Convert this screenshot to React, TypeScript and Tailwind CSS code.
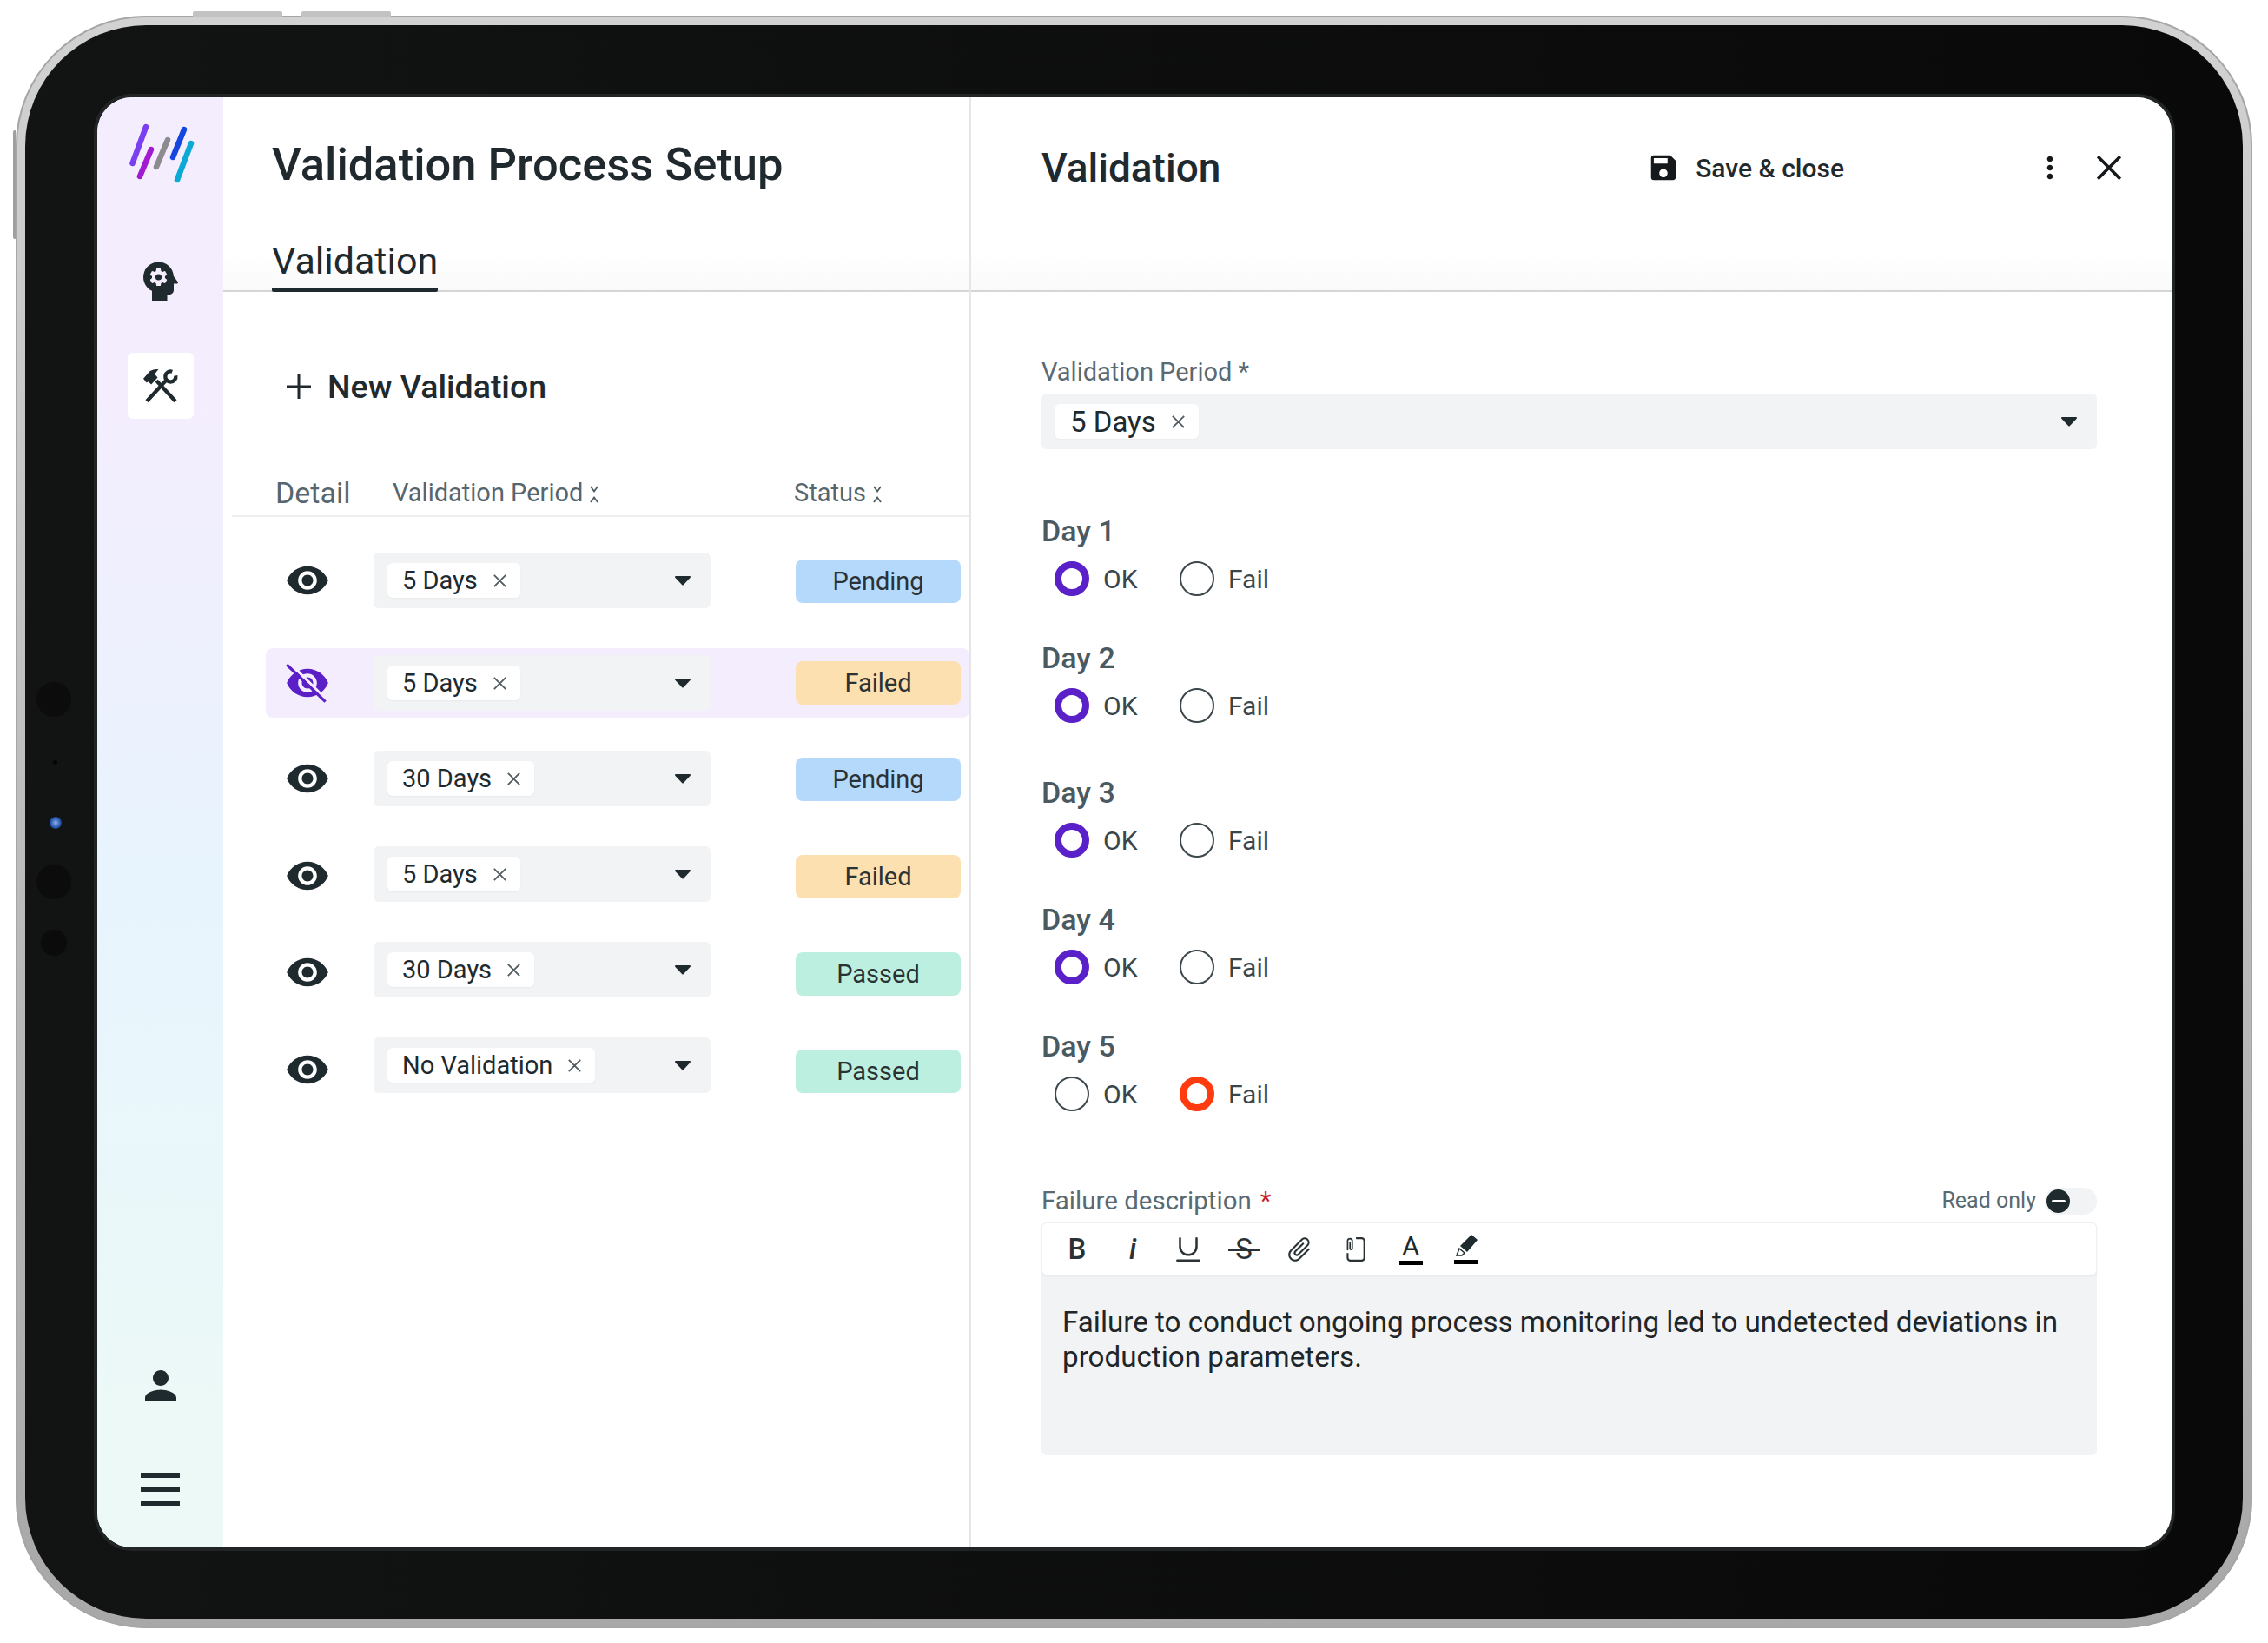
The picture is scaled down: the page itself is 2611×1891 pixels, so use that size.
import React from "react";
import { MdPsychology, MdPerson, MdSave, MdMoreVert, MdAttachFile } from "react-icons/md";
import { Underline } from "lucide-react";

const FONT = "font-['Roboto','Noto_Sans',sans-serif]";
const EYE =
  "M12 4.5C7 4.5 2.73 7.61 1 12c1.73 4.39 6 7.5 11 7.5s9.27-3.11 11-7.5c-1.73-4.39-6-7.5-11-7.5zM12 17c-2.76 0-5-2.24-5-5s2.24-5 5-5 5 2.24 5 5-2.24 5-5 5zm0-8c-1.66 0-3 1.34-3 3s1.34 3 3 3 3-1.34 3-3-1.34-3-3-3z";

function Logo() {
  return (
    <svg viewBox="140 136 85 78" className="w-[85px] h-[78px]" fill="none" strokeWidth="6.5" strokeLinecap="round">
      <path d="M166 146L150.500 188" stroke="#7a3ff0" />
      <path d="M172 172L159 203" stroke="#a11bd1" />
      <path d="M191 161L178 192" stroke="#8b8b90" />
      <path d="M210 149L197 181" stroke="#1546e0" />
      <path d="M218 165L202 207" stroke="#0aa9d6" />
    </svg>
  );
}

function ToolsIcon() {
  return (
    <svg viewBox="70 400 125 125" className="w-[42px] h-[42px]" fill="none" stroke="#1f2a2e" strokeWidth="13">
      <path d="M85 515L150 445" />
      <path d="M183 515L118 445" />
      <path d="M73 438L96 412Q110 404 125 406L112 422L122 434L100 458L90 448L84 452Z" fill="#1f2a2e" stroke="none" />
      <path d="M172 414A18 18 0 1 0 184 428" />
    </svg>
  );
}

function Caret() {
  return (
    <svg viewBox="0 0 20 12" className="w-[20px] h-[12px]">
      <path d="M2 2h16l-8 8.500z" fill="#1f2a2e" stroke="#1f2a2e" strokeWidth="2" strokeLinejoin="round" />
    </svg>
  );
}

function CloseMark({ className }: { className: string }) {
  return (
    <svg viewBox="0 0 14 14" className={className} fill="none" stroke="#4f5b60" strokeWidth="1.500">
      <path d="M1.500 1.500l11 11M12.500 1.500l-11 11" />
    </svg>
  );
}

function SortMark() {
  return (
    <svg viewBox="0 0 14 24" className="w-[14px] h-[24px] ml-[6px] mt-[3px]" fill="none" stroke="#4f5b60" strokeWidth="1.800">
      <path d="M3 3l4 5.500 4-5.500M3 21l4-5.500 4 5.500" />
    </svg>
  );
}

function Chip({ label, wide }: { label: string; wide?: boolean }) {
  return (
    <div
      className={
        wide
          ? "flex items-center h-[40px] bg-white rounded-[6px] pl-[18px] pr-[15px] text-[33px] text-[#20292d] shadow-[0_1px_2px_rgba(0,0,0,0.04)]"
          : "flex items-center h-[40px] bg-white rounded-[6px] pl-[17px] pr-[15px] text-[29px] text-[#20292d] shadow-[0_1px_2px_rgba(0,0,0,0.04)]"
      }
    >
      <span className="pt-[2px]">{label}</span>
      <CloseMark className="w-[17px] h-[17px] ml-[17px]" />
    </div>
  );
}

type Row = {
  period: string;
  status: "Pending" | "Failed" | "Passed";
  statusShift: string;
  eyeShift: string;
  active?: boolean;
};

const ROWS: Row[] = [
  { period: "5 Days", status: "Pending", statusShift: "mt-[2px]", eyeShift: "" },
  { period: "5 Days", status: "Failed", statusShift: "", eyeShift: "", active: true },
  { period: "30 Days", status: "Pending", statusShift: "mt-[2px]", eyeShift: "" },
  { period: "5 Days", status: "Failed", statusShift: "mt-[6px]", eyeShift: "mt-[4px]" },
  { period: "30 Days", status: "Passed", statusShift: "mt-[10px]", eyeShift: "mt-[6px]" },
  { period: "No Validation", status: "Passed", statusShift: "mt-[13px]", eyeShift: "mt-[10px]" },
];

const STATUS_BG: Record<Row["status"], string> = {
  Pending: "bg-[#b5d9fb]",
  Failed: "bg-[#fde0b0]",
  Passed: "bg-[#bcefdf]",
};

function TableRow({ row }: { row: Row }) {
  return (
    <div
      className={
        row.active
          ? "flex items-center h-[80px] pl-[22px] rounded-[8px] bg-[#f4edfd]"
          : "flex items-center h-[80px] pl-[22px] rounded-[8px]"
      }
    >
      <div className={"w-[52px] shrink-0 " + row.eyeShift}>
        {row.active ? (
          <svg viewBox="0 0 24 24" className="w-[52px] h-[52px]">
            <path d={EYE} fill="#5b1fc7" />
            <path d="M2.500 1.300L22.500 21.300" stroke="#f4edfd" strokeWidth="1.400" />
            <path d="M1 2.300L21.500 22" stroke="#5b1fc7" strokeWidth="1.500" />
          </svg>
        ) : (
          <svg viewBox="0 0 24 24" className="w-[52px] h-[52px]">
            <path d={EYE} fill="#1f2a2e" />
          </svg>
        )}
      </div>
      <div className="ml-[50px] w-[388px] h-[64px] shrink-0 flex items-center justify-between pl-[16px] pr-[22px] rounded-[6px] bg-[#f1f3f4]">
        <Chip label={row.period} />
        <Caret />
      </div>
      <div
        className={
          "ml-[98px] w-[190px] h-[50px] shrink-0 flex items-center justify-center pt-[2px] rounded-[8px] text-[29px] text-[#2a3236] " +
          STATUS_BG[row.status] +
          " " +
          row.statusShift
        }
      >
        {row.status}
      </div>
    </div>
  );
}

function Radio({ on, color }: { on: boolean; color: string }) {
  return on ? (
    <span className={"block w-[40px] h-[40px] rounded-full bg-white border-[8px] " + color} />
  ) : (
    <span className="block w-[40px] h-[40px] rounded-full bg-white border-2 border-[#3d484d]" />
  );
}

function DayGroup({ day, failed, className }: { day: number; failed?: boolean; className?: string }) {
  return (
    <div className={className}>
      <div className="h-[40px] flex items-center text-[34px] font-medium text-[#4a5a60]">Day {day}</div>
      <div className="mt-[13px] h-[44px] flex items-center pl-[15px] text-[30px] text-[#3a464b]">
        <Radio on={!failed} color="border-[#5b21c9]" />
        <span className="ml-[16px] w-[88px]">OK</span>
        <Radio on={!!failed} color="border-[#ff3b0f]" />
        <span className="ml-[16px]">Fail</span>
      </div>
    </div>
  );
}

function ClipNote() {
  return (
    <svg viewBox="0 0 24 28" className="w-[26px] h-[30px]" fill="none" stroke="#2a3236" strokeWidth="2">
      <path d="M13 2h6a3 3 0 0 1 3 3v18a3 3 0 0 1-3 3H7a3 3 0 0 1-3-3v-5" />
      <path d="M4 15V5a2.500 2.500 0 0 1 5 0v8a1.200 1.200 0 0 1-2.400 0V6" strokeWidth="1.600" />
    </svg>
  );
}

function ColorA() {
  return (
    <div className="flex flex-col items-center w-[27px]">
      <span className="text-[31px] leading-[30px] text-[#1f2a2e]">A</span>
      <span className="block w-[27px] h-[5px] mt-[1px] bg-black" />
    </div>
  );
}

function Marker() {
  return (
    <svg viewBox="0 0 30 36" className="w-[30px] h-[36px]">
      <path d="M21 1l7 6-12 14-8-7z" fill="#1f2a2e" />
      <path d="M7 17l6 5-3 3H4z" fill="none" stroke="#1f2a2e" strokeWidth="1.500" />
      <rect x="1" y="30" width="28" height="5" fill="#000" />
    </svg>
  );
}

function StruckS() {
  return (
    <span className="relative flex justify-center w-[36px] text-[33px] leading-[36px]">
      S
      <span className="absolute left-0 top-[18px] w-[36px] h-[2px] bg-[#2a3236]" />
    </span>
  );
}

const TOOL = "w-[64px] flex justify-center items-center text-[#2a3236]";

export default function App() {
  return (
    <div className={"w-[2611px] h-[1891px] bg-white pt-[18px] pl-[18px] " + FONT}>
      <div className="relative w-[2575px] h-[1856px] rounded-[150px] p-[11px] bg-gradient-to-b from-[#d2d2d2] to-[#a8a8a8] shadow-[inset_0_0_0_2px_#a6a6a6]">
        {/* hardware buttons on the top and left edges */}
        <div className="absolute top-[-5px] left-[204px] w-[103px] h-[6px] rounded-t-[2px] bg-[#c2c2c2]" />
        <div className="absolute top-[-5px] left-[329px] w-[103px] h-[6px] rounded-t-[2px] bg-[#c2c2c2]" />
        <div className="absolute top-[132px] left-[-3px] w-[3px] h-[125px] rounded-l-[2px] bg-[#a0a0a0]" />

        <div className="relative w-full h-full rounded-[139px] bg-gradient-to-r from-[#121313] to-[#090909] pt-[83px] pl-[83px] pr-[82px] pb-[82px]">
          {/* camera cluster in the bezel */}
          <span className="absolute left-[13px] top-[756px] w-[40px] h-[40px] rounded-full bg-[#0c0c0c]" />
          <span className="absolute left-[32px] top-[846px] w-[5px] h-[5px] rounded-full bg-[#050505]" />
          <span className="absolute left-[28px] top-[911px] w-[14px] h-[14px] rounded-full bg-[radial-gradient(circle,#8fb4e8,#1f4fa8_60%,#101a33)]" />
          <span className="absolute left-[13px] top-[966px] w-[40px] h-[40px] rounded-full bg-[#0c0c0c]" />
          <span className="absolute left-[18px] top-[1041px] w-[30px] h-[30px] rounded-full bg-[#0b0b0b]" />

          <div className="flex w-full h-full rounded-[40px] overflow-hidden bg-white shadow-[0_0_0_4px_#222526]">
            {/* navigation rail */}
            <aside className="w-[145px] shrink-0 flex flex-col items-center bg-gradient-to-b from-[#f4edfd] from-20% via-[#e7f4fd] via-55% to-[#ecf9f7] to-90%">
              <div className="mt-[24px]">
                <Logo />
              </div>
              <MdPsychology className="mt-[80px] -scale-x-100 w-[60px] h-[60px] text-[#1f2a2e]" />
              <div className="mt-[52px] w-[76px] h-[76px] rounded-[6px] bg-white flex items-center justify-center">
                <ToolsIcon />
              </div>
              <MdPerson className="mt-auto w-[54px] h-[54px] text-[#1f2a2e]" />
              <div className="mt-[73px] mb-[48px] flex flex-col gap-[10px]">
                <span className="block w-[45px] h-[6px] bg-[#1f2a2e]" />
                <span className="block w-[45px] h-[6px] bg-[#1f2a2e]" />
                <span className="block w-[45px] h-[6px] bg-[#1f2a2e]" />
              </div>
            </aside>

            {/* list of validations */}
            <section className="w-[861px] shrink-0 border-r-2 border-[#e4e6e7]">
              <header className="h-[224px] flex flex-col pl-[56px] pt-[45px] border-b-2 border-[#d4d6d6] bg-gradient-to-b from-white from-80% to-[#fafafa]">
                <h1 className="text-[52.500px] leading-[64px] font-medium text-[#20292d]">Validation Process Setup</h1>
                <div className="mt-auto self-start w-[191px] h-[60px] -mb-[2px] border-b-4 border-[#1f2a2e] rounded-b-[2px] text-[43px] leading-[48px] text-[#20292d]">
                  Validation
                </div>
              </header>

              <div className="mt-[81px] h-[56px] flex items-center pl-[73px] text-[37.500px] font-medium text-[#20292d]">
                <svg viewBox="0 0 28 28" className="w-[28px] h-[28px]" fill="none" stroke="#20292d" strokeWidth="3">
                  <path d="M14 0v28M0 14h28" />
                </svg>
                <span className="ml-[19px]">New Validation</span>
              </div>

              <div className="mt-[67px] ml-[10px] h-[55px] flex items-center border-b-2 border-[#eeeeee] pl-[50px] pt-[2px] text-[29px] text-[#55666e]">
                <span className="w-[135px] text-[34px]">Detail</span>
                <span className="w-[462px] flex items-center">
                  Validation Period
                  <SortMark />
                </span>
                <span className="flex items-center">
                  Status
                  <SortMark />
                </span>
              </div>

              <div className="mt-[33px] ml-[49px] flex flex-col gap-[30px]">
                {ROWS.map((row, i) => (
                  <div key={i} className={row.active ? "mt-[8px]" : ""}>
                    <TableRow row={row} />
                  </div>
                ))}
              </div>
            </section>

            {/* detail form */}
            <section className="flex-1 min-w-0">
              <header className="h-[224px] flex items-start pl-[81px] pr-[58px] pt-[49px] border-b-2 border-[#d4d6d6] bg-gradient-to-b from-white from-80% to-[#fafafa]">
                <div className="h-[64px] w-full flex items-center">
                  <h2 className="text-[46px] font-medium text-[#20292d]">Validation</h2>
                  <div className="ml-auto flex items-center">
                    <MdSave className="w-[38px] h-[38px] text-[#15191b]" />
                    <span className="ml-[18px] text-[30px] font-medium text-[#20292d]">Save &amp; close</span>
                  </div>
                  <MdMoreVert className="ml-[217px] w-[40px] h-[40px] text-[#15191b]" />
                  <svg viewBox="0 0 26 26" className="ml-[34px] w-[28px] h-[28px]" fill="none" stroke="#15191b" strokeWidth="3.400">
                    <path d="M1 1l24 24M25 1L1 25" />
                  </svg>
                </div>
              </header>

              <div className="pl-[81px] w-[1296px]">
                <div className="mt-[75px] h-[36px] flex items-center text-[29px] text-[#5a6a72]">Validation Period *</div>
                <div className="mt-[6px] h-[64px] flex items-center justify-between pl-[15px] pr-[22px] rounded-[6px] bg-[#f1f3f4]">
                  <Chip label="5 Days" wide />
                  <Caret />
                </div>

                <div className="mt-[74px] flex flex-col gap-[49px]">
                  <DayGroup day={1} />
                  <DayGroup day={2} />
                  <DayGroup day={3} className="mt-[9px]" />
                  <DayGroup day={4} />
                  <DayGroup day={5} failed />
                </div>

                <div className="mt-[85px] h-[32px] flex items-center text-[29.500px] text-[#5a6a72]">
                  <span>Failure description</span>
                  <span className="ml-[10px] text-[#c81e2b]">*</span>
                  <span className="ml-auto text-[25px]">Read only</span>
                  <div className="ml-[10px] w-[60px] h-[31px] rounded-full bg-[#f1f3f4] pl-[2px] flex items-center">
                    <span className="w-[27px] h-[27px] rounded-full bg-[#1f2a2e] flex items-center justify-center">
                      <span className="block w-[16px] h-[3px] rounded-full bg-white" />
                    </span>
                  </div>
                </div>

                <div className="mt-[9px] h-[268px] rounded-[6px] bg-[#f1f3f4]">
                  <div className="h-[61px] flex items-center pl-[8px] bg-white border border-[#eff0f1] rounded-[6px] shadow-[0_1px_3px_rgba(0,0,0,0.05)]">
                    <span className={TOOL + " text-[33px] font-medium"}>B</span>
                    <span className={TOOL + " text-[33px] font-medium italic"}>i</span>
                    <span className={TOOL}><Underline className="w-[38px] h-[38px]" strokeWidth={1.600} /></span>
                    <span className={TOOL}><StruckS /></span>
                    <span className={TOOL}><MdAttachFile className="w-[34px] h-[34px] rotate-45" /></span>
                    <span className={TOOL}><ClipNote /></span>
                    <span className={TOOL}><ColorA /></span>
                    <span className={TOOL}><Marker /></span>
                  </div>
                  <p className="mt-[34px] px-[24px] text-[33.200px] leading-[40px] text-[#1f2629]">
                    Failure to conduct ongoing process monitoring led to undetected deviations in production parameters.
                  </p>
                </div>
              </div>
            </section>
          </div>
        </div>
      </div>
    </div>
  );
}
